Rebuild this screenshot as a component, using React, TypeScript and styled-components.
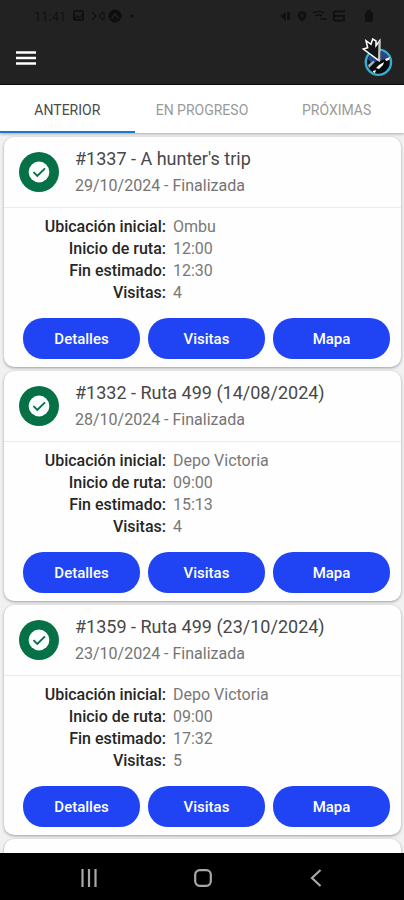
import React, { useState } from 'react';
import styled, { createGlobalStyle } from 'styled-components';

const GlobalStyle = createGlobalStyle`
  * { box-sizing: border-box; }
  body { margin: 0; background: #f1f1f2; font-family: Roboto, sans-serif; }
  button { font-family: inherit; border: 0; padding: 0; background: none; cursor: pointer; }
  h2, p, dl, dd { margin: 0; }
`;

const Screen = styled.div`
  display: flex;
  flex-direction: column;
  height: 100vh;
  overflow: hidden;
`;

const TopArea = styled.header`
  flex: none;
  background: #222222;
  border-bottom: 1px solid #0c0c0c;
`;

const StatusBar = styled.div`
  display: flex;
  align-items: center;
  justify-content: space-between;
  height: 32px;
  padding: 0 28px 0 34px;
  color: #111111;
  font-size: 13px;
`;

const StatusGroup = styled.div`
  display: flex;
  align-items: center;
  gap: 6px;

  svg { display: block; }
`;

const AppBar = styled.div`
  display: flex;
  align-items: center;
  justify-content: space-between;
  height: 52px;
  padding: 0 9px 0 16px;
`;

const IconButton = styled.button`
  display: flex;

  svg { display: block; }
`;

const TabList = styled.div`
  flex: none;
  display: grid;
  grid-template-columns: repeat(3, 1fr);
  background: #ffffff;
  box-shadow: 0 1px 3px rgba(0, 0, 0, 0.3);
  z-index: 1;
`;

const Tab = styled.button<{ $active: boolean }>`
  height: 48px;
  padding-top: 3px;
  font-size: 14px;
  color: ${({ $active }) => ($active ? '#4a4a4a' : '#9a9a9a')};
  border-bottom: 2px solid ${({ $active }) => ($active ? '#1976d2' : 'transparent')};
`;

const RouteList = styled.main`
  flex: 1;
  min-height: 0;
  display: flex;
  flex-direction: column;
  gap: 4px;
  padding: 4px 3px 0 4px;
  overflow: hidden;
`;

const Card = styled.article`
  flex: none;
  min-height: 230px;
  background: #fefefe;
  border-radius: 10px;
  box-shadow: 0 1px 3px rgba(0, 0, 0, 0.36);
`;

const CardHeader = styled.div`
  display: flex;
  align-items: center;
  gap: 16px;
  height: 71px;
  padding: 0 16px 0 15px;
  border-bottom: 1px solid #ebebeb;
`;

const StatusBadge = styled.span`
  flex: none;
  display: grid;
  place-items: center;
  width: 40px;
  height: 40px;
  border-radius: 50%;
  background: #067047;
`;

const Title = styled.h2`
  font-size: 18px;
  line-height: 28px;
  font-weight: 400;
  color: #484848;
`;

const Subtitle = styled.p`
  font-size: 16px;
  line-height: 26px;
  color: #747474;
`;

const Facts = styled.dl`
  display: grid;
  grid-template-columns: 162px 1fr;
  column-gap: 7px;
  padding-top: 8px;
  font-size: 16px;
  line-height: 22px;
`;

const FactName = styled.dt`
  text-align: right;
  font-weight: 500;
  color: #262626;
`;

const FactValue = styled.dd`
  color: #787878;
`;

const Actions = styled.div`
  display: grid;
  grid-template-columns: repeat(3, 1fr);
  gap: 8px;
  padding: 14px 11px 8px 19px;
`;

const ActionButton = styled.button`
  height: 41px;
  border-radius: 20px;
  background: #2044f4;
  color: #ffffff;
  font-size: 15px;
  font-weight: 500;
`;

const NavBar = styled.nav`
  flex: none;
  display: flex;
  align-items: center;
  justify-content: space-between;
  height: 47px;
  padding: 2px 79px 0 80px;
  background: #000000;
  z-index: 1;
`;

const MenuIcon = () => (
  <svg width="20" height="16" viewBox="0 0 20 16" aria-hidden="true">
    <path d="M0 2.5h20M0 8h20M0 13.5h20" stroke="#fff" strokeWidth="2.6" />
  </svg>
);

const Logo = () => (
  <svg width="34" height="40" viewBox="0 0 34 40" aria-hidden="true">
    <circle cx="17.4" cy="24.3" r="12.6" fill="#08090c" stroke="#38add0" strokeWidth="2.4" />
    <path d="M7 21Q9 15 14 14l3 9-7 2zM20 13.500q6 1 8 6l-8 3z" fill="#24498a" />
    <path d="M7 27l5-4 2 1-6 6z" fill="#9ab9c6" />
    <path d="M18 27l5-3-1 3-4 4-3-1zM12 33l3-1-1 3-2-1zM24 21l5-2-1 3-3 1z" fill="#fff" />
    <path d="M18 22.700L2.300 11l4.400-1.300L5 2.700l5 3.600L11.700 1 15 3v4.700l3.700-5z" fill="#151515" stroke="#fff" strokeWidth="1.500" />
    <path d="M18.500 3v20" stroke="#c3c7ca" strokeWidth="2" />
  </svg>
);

const CheckIcon = () => (
  <svg width="22" height="22" viewBox="0 0 22 22" aria-hidden="true">
    <circle cx="11" cy="11" r="10.400" fill="#fbfffd" />
    <path d="M5.500 11.200l3.800 3.800L17 7.300" fill="none" stroke="#067047" strokeWidth="1.900" />
  </svg>
);

const NoticeIcons = () => (
  <svg width="63" height="14" viewBox="0 0 63 14" fill="none" stroke="#111" aria-hidden="true">
    <rect x="2" y="2" width="9" height="9" rx="1" strokeWidth="2" />
    <path d="M2 11l3-4 2 2 3-3" strokeWidth="1.500" />
    <path d="M20 3l4 4-4 4M31 3l-4 4 4 4M32 3v8" strokeWidth="1.200" />
    <circle cx="43" cy="7" r="6.500" fill="#0e0e0e" stroke="none" />
    <path d="M39.500 9.500L43 5l3.500 4.500" stroke="#222" strokeWidth="1.500" />
    <circle cx="60" cy="7" r="1.500" fill="#0e0e0e" stroke="none" />
  </svg>
);

const SystemIcons = () => (
  <svg width="96" height="14" viewBox="0 0 96 14" fill="#111" aria-hidden="true">
    <path d="M0 7l6-4v9zM7 3h3v8H7z" />
    <path d="M22 2a4.500 4.500 0 0 0-4.500 4.500C17.500 9 22 13 22 13s4.500-4 4.500-6.500A4.500 4.500 0 0 0 22 2zm0 3a1.500 1.500 0 1 1 0 3 1.500 1.500 0 0 1 0-3z" />
    <path d="M33 4q5-3 11 0M35 7q4-2 7 0M40 10h7" fill="none" stroke="#111" strokeWidth="1.500" />
    <path d="M54 2.500h11M53 7h12M54 11.500h11M54 2v10M64 7v5" fill="none" stroke="#111" strokeWidth="2" />
    <rect x="85" y="3" width="8" height="10" rx="2" />
    <rect x="87" y="1" width="4" height="3" />
  </svg>
);

const RecentsIcon = () => (
  <svg width="18" height="18" viewBox="0 0 18 18" aria-hidden="true">
    <path d="M2.500 0v18M9 0v18M15.500 0v18" stroke="#a8a8a8" strokeWidth="2.200" />
  </svg>
);

const HomeIcon = () => (
  <svg width="18" height="18" viewBox="0 0 18 18" aria-hidden="true">
    <rect x="1.200" y="1.200" width="15.600" height="15.600" rx="4.500" fill="none" stroke="#a8a8a8" strokeWidth="2.200" />
  </svg>
);

const BackIcon = () => (
  <svg width="18" height="18" viewBox="0 0 18 18" aria-hidden="true">
    <path d="M13.500 1L5 9l8.500 8" fill="none" stroke="#a8a8a8" strokeWidth="2.200" />
  </svg>
);

interface Route {
  title: string;
  date: string;
  facts: [string, string][];
}

const makeFacts = (place: string, start: string, end: string, visits: string): [string, string][] => [
  ['Ubicación inicial:', place],
  ['Inicio de ruta:', start],
  ['Fin estimado:', end],
  ['Visitas:', visits],
];

const routes: Route[] = [
  { title: "#1337 - A hunter's trip", date: '29/10/2024', facts: makeFacts('Ombu', '12:00', '12:30', '4') },
  { title: '#1332 - Ruta 499 (14/08/2024)', date: '28/10/2024', facts: makeFacts('Depo Victoria', '09:00', '15:13', '4') },
  { title: '#1359 - Ruta 499 (23/10/2024)', date: '23/10/2024', facts: makeFacts('Depo Victoria', '09:00', '17:32', '5') },
];

const tabs = ['ANTERIOR', 'EN PROGRESO', 'PRÓXIMAS'];
const actions = ['Detalles', 'Visitas', 'Mapa'];

const RouteCard = ({ route }: { route: Route }) => (
  <Card>
    <CardHeader>
      <StatusBadge><CheckIcon /></StatusBadge>
      <div>
        <Title>{route.title}</Title>
        <Subtitle>{route.date} - Finalizada</Subtitle>
      </div>
    </CardHeader>
    <Facts>
      {route.facts.map(([name, value]) => (
        <React.Fragment key={name}>
          <FactName>{name}</FactName>
          <FactValue>{value}</FactValue>
        </React.Fragment>
      ))}
    </Facts>
    <Actions>
      {actions.map((label) => (
        <ActionButton key={label} type="button">{label}</ActionButton>
      ))}
    </Actions>
  </Card>
);

export default function App() {
  const [active, setActive] = useState(tabs[0]);
  return (
    <Screen>
      <GlobalStyle />
      <TopArea>
        <StatusBar>
          <StatusGroup><span>11:41</span><NoticeIcons /></StatusGroup>
          <StatusGroup><SystemIcons /></StatusGroup>
        </StatusBar>
        <AppBar>
          <IconButton type="button" aria-label="Menú"><MenuIcon /></IconButton>
          <Logo />
        </AppBar>
      </TopArea>
      <TabList role="tablist">
        {tabs.map((tab) => (
          <Tab key={tab} type="button" role="tab" aria-selected={tab === active} $active={tab === active} onClick={() => setActive(tab)}>
            {tab}
          </Tab>
        ))}
      </TabList>
      <RouteList>
        {routes.map((route) => <RouteCard key={route.title} route={route} />)}
        <Card />
      </RouteList>
      <NavBar>
        <IconButton type="button" aria-label="Recientes"><RecentsIcon /></IconButton>
        <IconButton type="button" aria-label="Inicio"><HomeIcon /></IconButton>
        <IconButton type="button" aria-label="Atrás"><BackIcon /></IconButton>
      </NavBar>
    </Screen>
  );
}
